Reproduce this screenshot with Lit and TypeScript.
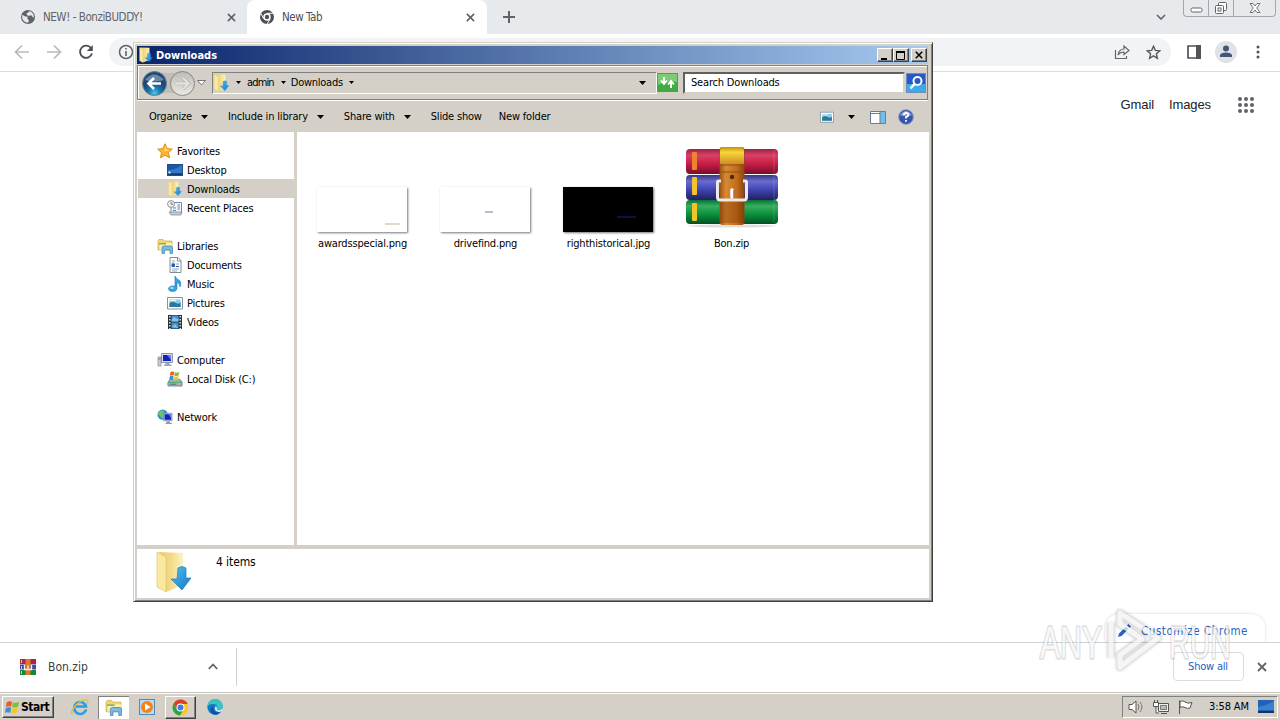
import { LitElement, html, svg, css } from "lit";
import { customElement } from "lit/decorators.js";

const icon = (w: number, h: number, body: unknown, box = `0 0 ${w} ${h}`) =>
  html`<svg class="ic" width=${w} height=${h} viewBox=${box} fill="none">${body}</svg>`;

const gradients = svg`<defs>
  <linearGradient id="fold" x2="1"><stop stop-color="#e9cc6c"/><stop offset=".55" stop-color="#f3dc8c"/><stop offset="1" stop-color="#fdf3c4"/></linearGradient>
  <linearGradient id="arr" x2="1" y2="1"><stop stop-color="#51c2f3"/><stop offset="1" stop-color="#1477c4"/></linearGradient>
</defs>`;

const folderDown = (w: number, h: number) => icon(w, h, svg`${gradients}
  <path d="M3 1L27 2V34L10 41z" fill="url(#fold)"/>
  <path d="M1 1L10 6V41L1 36z" fill="#fbe99f" stroke="#dcc16a" stroke-width=".6"/>
  <path d="M22 17Q26 14 30 17V27H35L26 39L15 28H21z" fill="url(#arr)" stroke="#1c82c9" stroke-width=".7"/>`, "0 0 36 42");

const star = icon(17, 17, svg`<path d="M8.500.8L10.800 5.900L16.300 6.500L12.200 10.300L13.400 15.900L8.500 13.100L3.600 15.900L4.700 10.300L.7 6.500L6.200 5.900Z" fill="#fdb52c" stroke="#d9841b" stroke-width=".9"/><path d="M8.500 3L10 7L14 7.500L8 9Z" fill="#ffe184"/>`, "0 0 17 17");
const desktop = icon(16, 16, svg`<rect x=".5" y="2.500" width="15" height="11" fill="#1b56ac" stroke="#244f83"/><path d="M1 8Q8 8 15 3V11H1z" fill="#2f78ca"/><path d="M1 11.500H15V13H1z" fill="#173a70"/><path d="M1 10.500l1.500-1.500 1.500 1.500-1.500 1.500z" fill="#bfe0f4"/>`);
const recent = icon(16, 16, svg`<path d="M4 2.500H14.500V13H4z" fill="#f2f5f8" stroke="#7b8794"/><path d="M2 12H15L14 15H4z" fill="#c3ccd4" stroke="#7b8794" stroke-width=".7"/><path d="M6 8h3M6 10.500h3M10.500 5h2.500M10.500 7h2.500M10.500 9h2.500" stroke="#5688b4"/><circle cx="4" cy="4" r="3.400" fill="#f7f7f7" stroke="#8e8e8e"/><path d="M4 2V4.300H6" stroke="#555" stroke-width=".8"/>`);
const library = (w: number, h: number) => icon(w, h, svg`<path d="M1 3L2 1.500H6L7.500 3H15V12H1z" fill="#f2d875" stroke="#c6a845" stroke-width=".7"/><path d="M2.500 5H15V12H2.500z" fill="#fff0a6"/><path d="M2 5h7v1.500H2z" fill="#69b47c"/><path d="M5 15.500V10Q5 8 7 8H14Q15.500 8 15.500 10V15.500H13V12H7.500V15.500z" fill="#79bce3" stroke="#4182b4" stroke-width=".7"/>`, "0 0 16 16");
const documentIcon = icon(16, 16, svg`<path d="M3 .5H11L14 3.500V15.500H3z" fill="#fff" stroke="#7d8c9c"/><path d="M10.500 1v3H14" stroke="#7d8c9c"/><path d="M5 4h3M5 6h2M9 7h3M5 12h7M5 14h5" stroke="#92a5b8"/><path d="M4.500 6.500h3.500v3.500H4.500z" fill="#2763ab"/><path d="M9 9.500h3" stroke="#2763ab"/>`);
const music = icon(16, 16, svg`<path d="M8 0Q9 3 12 4Q15 6 13 11Q13 7 10 6.500V12Q10 15.500 5.500 15.500Q1.500 15.500 1.500 12.500Q2 9.500 8 10z" fill="#35a3e1" stroke="#1878ba" stroke-width=".6"/><ellipse cx="5" cy="12" rx="2" ry="1" fill="#9edbfa"/>`);
const pictures = (w: number, h: number) => icon(w, h, svg`<path d="M.5 2.500H15.500V14H.5z" fill="#fff" stroke="#8594a2"/><path d="M2.500 4.500H13.500V12H2.500z" fill="#8accf0"/><path d="M2.500 8Q6 6 9 8T13.500 7V12H2.500z" fill="#2c7785"/><path d="M2.500 11Q8 8 13.500 10.500V12H2.500z" fill="#2a74a8"/><path d="M3 5.500h6" stroke="#e4f5fc"/>`, "0 0 16 16");
const videos = icon(16, 16, svg`<path d="M1 1H15V15H1z" fill="#26303a"/><path d="M4.500 1.500H11.500V7.500H4.500zM4.500 8.500H11.500V14.500H4.500z" fill="#3c94d2"/><path d="M4.500 6L7 3L10 5L11.500 4V7.500H4.500zM5 13L8 10L11 14z" fill="#8bbfdf"/><path d="M2.800 2V15M13.200 2V15" stroke="#fff" stroke-width="1.300" stroke-dasharray="1.500 1.500"/>`);
const computer = icon(16, 16, svg`<path d="M4.500 1.500H15.500V10.500H4.500z" fill="#d7dce8" stroke="#8b94a8"/><path d="M6 3H14V9H6z" fill="#1420bd"/><path d="M10 3h4v5z" fill="#687ceb"/><path d="M8.500 11h4v1.500h2V14H7v-1.500h1.500z" fill="#9da6b6"/><path d="M1 5H4V14H1z" fill="#cbd0d8" stroke="#7d8795" stroke-width=".7"/><path d="M1.500 7h2" stroke="#657080"/>`);
const flagPaths = svg`<path d="M1 2Q4 0 7 1.500L6 7Q3 6 0 7.500z" fill="#ee5b22"/><path d="M8 2Q11 3.500 15 1.500L14 7Q10 9 7 7.200z" fill="#83bd3e"/><path d="M0 8.500Q3 7 6 8L5 14Q2 12.500-1 14z" fill="#358ee0"/><path d="M7 8.500Q10 10 14 8L13 13.500Q9 15.500 6 14z" fill="#f8c520"/>`;
const disk = icon(17, 17, svg`<path d="M3 9L14 9L16 12V16H1V12z" fill="#a7b3b9" stroke="#65757d" stroke-width=".8"/><path d="M1 12h15" stroke="#4fb57c" stroke-width="1.500"/><path d="M3 14h7" stroke="#4c6375"/><g transform="translate(3 0) scale(.67)">${flagPaths}</g>`);
const network = icon(17, 17, svg`<circle cx="6" cy="6" r="5.500" fill="#2b94c5"/><path d="M2 3Q5 1 8 2L6 5L8 8L5 10L3 7L1 6z" fill="#71c268"/><path d="M7 4.500H16V12.500H7z" fill="#cfd5e6" stroke="#7e88a4" stroke-width=".8"/><path d="M8 5.500H15V11.500H8z" fill="#1422bf"/><path d="M12 5.500h3v4z" fill="#6a80ee"/><path d="M10 13h4v2h2v1H9v-1h1z" fill="#919bb0"/>`);

const winrar = icon(96, 84, svg`<defs>
  <linearGradient id="r" y2="1" x2="0"><stop stop-color="#942443"/><stop offset=".25" stop-color="#dc4065"/><stop offset=".6" stop-color="#c51e46"/><stop offset="1" stop-color="#750d2a"/></linearGradient>
  <linearGradient id="b" y2="1" x2="0"><stop stop-color="#343577"/><stop offset=".25" stop-color="#676cd0"/><stop offset=".6" stop-color="#4043b0"/><stop offset="1" stop-color="#20215e"/></linearGradient>
  <linearGradient id="g" y2="1" x2="0"><stop stop-color="#087036"/><stop offset=".25" stop-color="#38ae5f"/><stop offset=".6" stop-color="#0b8f3c"/><stop offset="1" stop-color="#035120"/></linearGradient>
  <linearGradient id="belt" x2="1"><stop stop-color="#9b5214"/><stop offset=".25" stop-color="#d88a32"/><stop offset=".7" stop-color="#c26b1b"/><stop offset="1" stop-color="#8a4510"/></linearGradient>
  <linearGradient id="gold" y2="1" x2="0"><stop stop-color="#c89000"/><stop offset=".3" stop-color="#f7d63c"/><stop offset="1" stop-color="#cf8d22"/></linearGradient></defs>
  <ellipse cx="48" cy="80" rx="44" ry="1.500" fill="#000" opacity=".13"/>
  <rect x="2" y="3" width="92" height="25" rx="4" fill="url(#r)"/>
  <rect x="2" y="29" width="92" height="25" rx="4" fill="url(#b)"/>
  <rect x="2" y="54" width="92" height="24" rx="4" fill="url(#g)"/>
  <path d="M90 4V77" stroke="#fff" stroke-opacity=".15"/>
  <rect x="8" y="6" width="5" height="18" rx="1" fill="#eb842d"/><rect x="8" y="31" width="5" height="18" rx="1" fill="#f1c42e"/><rect x="8" y="57" width="5" height="18" rx="1" fill="#f1c42e"/>
  <rect x="35.500" y="1" width="25" height="78" rx="3" fill="url(#belt)"/>
  <path d="M36 5Q36 1 40 1H57Q60 1 60 5V18H36z" fill="url(#gold)"/><path d="M36 19H60M36 26H60" stroke="#8f4e13"/><path d="M36 55H60V77H36z" fill="#7a3500" opacity=".35"/>
  <circle cx="48" cy="31" r="2.200" fill="#572800"/>
  <path d="M37 35H34.500Q33.500 35 33.500 36V51Q33.500 54 36 54H60Q62.500 54 62.500 51V36Q62.500 35 61 35H59" stroke="#eee9e7" stroke-width="3"/><path d="M48 44V51" stroke="#fff" stroke-width="3.500" stroke-linecap="round"/><path d="M49.800 44v8" stroke="#8d7b72"/>`);
const winrarSmall = icon(16, 16, svg`<path d="M0 0H16V5H0z" fill="#b32044"/><path d="M0 5.500H16V10.500H0z" fill="#4148a8"/><path d="M0 11H16V16H0z" fill="#16853a"/><path d="M5.500 0H10.500V16H5.500z" fill="#dc7927"/><path d="M1.500 1v3M1.500 7v3M1.500 12v3" stroke="#f1d254"/><path d="M4.500 6V10.500H11.500V6M8 6.500v4" stroke="#f5eeee" stroke-width="1.300"/>`);

const x = (s: number, c = "#5f6368", w = 1.8) => icon(s, s, svg`<path d="M1 1L9 9M9 1L1 9" stroke=${c} stroke-width=${w}/>`, "0 0 10 10");
const down = icon(7, 4, svg`<path d="M0 0H7L3.500 4z" fill="#000"/>`);
const downSm = icon(5, 3, svg`<path d="M0 0H5L2.500 3z" fill="#000"/>`);
const chromeIcon = icon(17, 17, svg`<circle cx="8.500" cy="8.500" r="8" fill="#f9c826"/><path d="M1.600 4.500A8 8 0 0 1 15.700 5H8.500L5.200 10.500z" fill="#df3d2d"/><path d="M1.600 4.500A8 8 0 0 0 8 16.500L11.500 10.500H5.200z" fill="#2ba24d"/><circle cx="8.500" cy="8.500" r="4" fill="#fff"/><circle cx="8.500" cy="8.500" r="3" fill="#397fe4"/>`);

@customElement("app-root")
export class AppRoot extends LitElement {
  static styles = css`
    :host { display: block; width: 1280px; height: 720px; position: relative; overflow: hidden; background: #fff; color: #000; font: 11px/14px "DejaVu Sans Condensed", "DejaVu Sans", sans-serif; font-stretch: condensed; letter-spacing: -.18px; }
    * { box-sizing: border-box; }
    .ic { display: block; flex: none; }
    .browser { height: 720px; display: flex; flex-direction: column; }
    .row { display: flex; align-items: center; white-space: nowrap; }
    .tabs { height: 34px; background: #e7eaed; padding-left: 20px; color: #5f6368; font-size: 11.500px; flex: none; letter-spacing: -.45px; }
    .tab1 { width: 227px; gap: 7px; } .tab1 .ic:last-child, .tab2 .ic:last-child { margin-left: auto; }
    .tab1 { padding-right: 11px; }
    .tab2 { height: 34px; width: 240px; background: #fff; border-radius: 8px 8px 0 0; padding: 0 12px 0 12px; gap: 7px; color: #4b4e52; }
    .plus { margin-left: 16px; } .tabmenu { margin-left: 641px; }
    .controls { align-self: flex-start; margin-left: 17px; border: 1px solid #a4a8ac; border-top: 0; border-radius: 0 0 4px 4px; height: 17px; width: 93px; }
    .controls .row { height: 16px; justify-content: center; width: 25px; border-right: 1px solid #a4a8ac; }
    .controls .row:last-child { width: 41px; border: 0; }
    .toolbar { height: 38px; border-bottom: 1px solid #dadce0; padding: 0 0 1px 14px; flex: none; }
    .toolbar > .ic { margin-right: 16px; }
    .omni { width: 1062px; height: 28px; border-radius: 14px; background: #f1f3f4; padding: 0 10px 0 9px; margin-left: -1px; }
    .omni .share { margin-left: auto; margin-right: 16px; display: block; }
    .side { margin: 0 15px 0 16px; } .avatar { margin: 0 19px 0 -1px; }
    .page { flex: 1; display: flex; flex-direction: column; align-items: flex-end; justify-content: space-between; overflow: hidden; }
    .links { padding: 24px 26px 0 0; font: 13px/17px "Liberation Sans", Arial, sans-serif; color: #202124; letter-spacing: -.1px; }
    .links span { margin-right: 15px; } .links span + span { margin-right: 27px; }
    .customize { width: 160px; height: 28px; margin-right: 15px; padding: 5px 0 0 13px; gap: 8px; border-radius: 14px 14px 0 0; color: #2a64bd; box-shadow: 0 0 3px #d4d4d4; font-size: 11.500px; line-height: 14px; letter-spacing: .55px; }
    .customize .ic { margin-right: 2px; }
    .dl { height: 50px; border-top: 1px solid #d0d2d5; flex: none; padding: 0 13px 2px 20px; font-size: 12px; color: #3c4043; letter-spacing: 0; }
    .dlitem { height: 38px; width: 217px; border-right: 1px solid #d0d2d5; padding-right: 18px; gap: 12px; }
    .dlitem .ic:last-child { margin-left: auto; }
    .showall { margin-left: auto; width: 71px; height: 29px; border: 1px solid #dadce0; border-radius: 4px; justify-content: center; color: #1a5fc8; font-size: 11px; letter-spacing: -.2px; margin-right: 13px; padding-right: 1px; }
    .task { height: 28px; background: #d4d0c8; border-top: 1px solid #c7c3bc; box-shadow: inset 0 1px #fff; flex: none; padding: 2px 2px 1px; }
    .btn { background: #d4d0c8; border: 1px solid; border-color: #fff #404040 #404040 #fff; box-shadow: inset -1px -1px #808080; }
    .start { width: 52px; height: 22px; font-weight: bold; font-size: 12px; letter-spacing: -.5px; padding-left: 2px; gap: 1px; margin-right: 17px; }
    .app { height: 23px; width: 31px; justify-content: center; }
    .pressed { background: #fff; border-color: #404040 #fff #fff #404040; box-shadow: inset 1px 1px #808080; margin-left: 9px; }
    .wmp { margin: 0 10px 0 10px; } .edge { margin-left: 11px; }
    .tray { margin-left: auto; height: 22px; width: 156px; border: 1px solid; border-color: #808080 #fff #fff #808080; padding: 0 1px 0 5px; }
    .tray .ic { margin-right: 8px; } .tray span { margin: 0 9px 0 8px; letter-spacing: -.1px; } .tray .ic:last-child { margin: 0; }

    .win { position: absolute; left: 133px; top: 42px; width: 800px; height: 560px; background: #d4d0c8; border: 1px solid; border-color: #d4d0c8 #404040 #404040 #d4d0c8; box-shadow: inset 1px 1px #fff, inset -1px -1px #808080; padding: 3px; display: flex; flex-direction: column; }
    .title { height: 18px; margin-right: 1px; background: linear-gradient(90deg, #0a246a, #a6caf0); color: #fff; font-weight: bold; padding: 0 1px 0 2px; letter-spacing: 0; flex: none; }
    .title span { padding-top: 1px; }
    .title .ic { margin-right: 3px; }
    .wb { width: 16px; height: 14px; justify-content: center; } .wb .ic { margin: 0; } .first { margin-left: auto; } .last { margin-left: 2px; }
    .nav { height: 35px; margin: 1px 1px 0 0; border: 1px solid #808080; box-shadow: inset 1px 1px #fff, 0 1px #fff; padding-left: 4px; flex: none; }
    .drop { margin: 0 6px 0 0; }
    .addr { width: 445px; height: 22px; border: 1px solid; border-color: #808080 #fff #fff #808080; padding-left: 0; letter-spacing: -.25px; }
    .addr .ic { margin-right: 6px; } .addr span { margin-right: 6px; } .addr .adm { letter-spacing: -.85px; margin-right: 7px; } .addr .adm + .ic { margin-right: 5px; } .addr .end { margin: 0 4px 0 auto; }
    .search { width: 222px; height: 22px; background: #fff; border: 2px solid; border-color: #606060 #d4d0c8 #d4d0c8 #606060; padding: 1px 0 0 6px; margin: 0 1px 0 5px; }
    .cmd { height: 32px; padding: 2px 16px 0 12px; flex: none; }
    .cmd span { margin-right: 9px; } .cmd .ic { margin-right: 20px; } .cmd .slide { margin-right: 17px; }
    .cmd .v { display: flex; } .cmd .v .ic { margin-right: 12px; } .cmd .view { margin: 0 2px 0 auto; } .cmd .panel { margin-left: -5px; } .cmd .last-ic .ic { margin-right: -1px; }
    .main { height: 413px; display: flex; gap: 3px; flex: none; padding-right: 0; }
    .tree { width: 157px; background: #fff; padding-top: 9px; }
    .tree .row { height: 19px; padding-left: 19px; gap: 4px; margin-left: 1px; } .tree .child { padding-left: 29px; gap: 4px; } .tree .sel { background: #d4d0c8; } .tree .gap { margin-top: 19px; }
    .tree .row span { padding-top: 2px; }
    .tree .row .ic { width: 16px; height: 16px; }
    .files { flex: 1; background: #fff; display: flex; padding: 13px 0 0 4px; }
    .file { width: 123px; height: 107px; display: flex; flex-direction: column; align-items: center; justify-content: flex-end; }
    .thumb { width: 90px; height: 45px; background: #fff; box-shadow: 1px 1px 2px #777; margin: 0 2px 4px 0; display: flex; }
    .black { background: #000; }
    .mark { width: 15px; height: 1.500px; background: #e1dac4; margin: 36px 0 0 68px; } .m2 { width: 8px; background: #b8bdd7; margin: 24px 0 0 45px; } .m3 { width: 19px; background: #10103f; margin: 29px 0 0 54px; }
    .file .ic { margin-bottom: 6px; }
    .name { height: 16px; line-height: 15px; }
    .details { height: 49px; margin-top: 4px; background: #fff; display: flex; padding: 2px 0 0 19px; gap: 24px; font-size: 12px; line-height: 22px; letter-spacing: -.1px; }
    .wm { position: absolute; left: 1036px; top: 604px; }
    .wm text { font: 45px "Liberation Sans", sans-serif; letter-spacing: 0; }
    .wm .halo { opacity: .13; filter: blur(.8px); }
    .wm .face { opacity: .72; }
  `;

  private file(name: string, cls: string, mark: string) {
    return html`<div class="file"><div class="thumb ${cls}"><div class="mark ${mark}"></div></div><div class="name">${name}</div></div>`;
  }

  private node(ic: unknown, text: string, cls = "") {
    return html`<div class="row ${cls}">${ic}<span>${text}</span></div>`;
  }

  render() {
    return html`
    <div class="browser">
      <div class="row tabs">
        <div class="row tab1">${icon(16, 16, svg`<circle cx="8" cy="8" r="7" fill="#5f6368"/><path d="M2.200 6Q4 6 5 7.500H7.500V10L9 11.500L8 13.800Q3 13 2.200 9zM9 2.200L8 4H6.500L7 6L9 7L11 6L13.500 9Q14.500 5 11 2.800z" fill="#e7eaed"/>`)}<span>NEW! - BonziBUDDY!</span>${x(9)}</div>
        <div class="row tab2">${icon(16, 16, svg`<circle cx="8" cy="8" r="7" fill="#4d5156"/><circle cx="8" cy="8" r="3.700" fill="#fff"/><circle cx="8" cy="8" r="2.200" fill="#4d5156"/><path d="M8 4.300H15M4.800 9.800L1.600 4.200M11.200 9.800L7.800 15.500" stroke="#fff"/>`)}<span>New Tab</span>${x(9)}</div>
        <div class="plus">${icon(12, 12, svg`<path d="M6 0V12M0 6H12" stroke="#5f6368" stroke-width="2"/>`)}</div>
        <div class="tabmenu">${icon(10, 6, svg`<path d="M1 1L5 5L9 1" stroke="#5f6368" stroke-width="1.600"/>`)}</div>
        <div class="row controls">
          <div class="row">${icon(13, 16, svg`<rect x="1" y="8" width="11" height="4" rx="1.500" stroke="#5f6368" fill="#fff"/>`)}</div>
          <div class="row">${icon(14, 16, svg`<rect x="4.500" y="2.500" width="8" height="8" rx="1" stroke="#5f6368" fill="#fff"/><rect x="1.500" y="5.500" width="8" height="8" rx="1" stroke="#5f6368" fill="#fff"/><rect x="4" y="8" width="3" height="3" stroke="#5f6368"/>`)}</div>
          <div class="row">${icon(12, 16, svg`<path d="M1 3.500H4L6 6L8 3.500H11L7.700 8L11 12.500H8L6 10L4 12.500H1L4.300 8z" stroke="#70757a" fill="#fff"/>`)}</div>
        </div>
      </div>
      <div class="row toolbar">
        ${icon(16, 16, svg`<path d="M15 8H2M8 1.500L1.500 8L8 14.500" stroke="#b8babd" stroke-width="1.700"/>`)}
        ${icon(16, 16, svg`<path d="M1 8H14M8 1.500L14.500 8L8 14.500" stroke="#b8babd" stroke-width="1.700"/>`)}
        ${icon(16, 16, svg`<path d="M13 4A6.100 6.100 0 1 0 14 9.500" stroke="#4b4f54" stroke-width="1.900"/><path d="M14.800 1V7H8.800z" fill="#4b4f54"/>`)}
        <div class="row omni">${icon(16, 16, svg`<circle cx="8" cy="8" r="6.500" stroke="#5f6368" stroke-width="1.500"/><path d="M8 7V12M8 4V5.600" stroke="#5f6368" stroke-width="1.600"/>`)}
          <div class="share">${icon(16, 16, svg`<path d="M1.500 6V14.500H12.500V12M4 11Q5 5 10 5V2L15 6.500L10 10.500V8Q6 8 4 11z" stroke="#62666a" stroke-width="1.200"/>`)}</div>
          ${icon(15, 15, svg`<path d="M7.500 1.300L9.300 5.400L13.800 5.800L10.400 8.800L11.400 13.300L7.500 10.900L3.600 13.300L4.600 8.800L1.200 5.800L5.700 5.400z" stroke="#55595e" stroke-width="1.400"/>`)}</div>
        <div class="side">${icon(14, 14, svg`<path d="M1 1H13V13H1z" stroke="#505459" stroke-width="1.700"/><path d="M9 0H14V14H9z" fill="#505459"/>`)}</div>
        <div class="avatar">${icon(22, 22, svg`<circle cx="11" cy="11" r="11" fill="#dfe2e6"/><circle cx="11" cy="7.500" r="3" fill="#465574"/><path d="M5 16V14Q6 11.500 11 11.500T17 14V16z" fill="#465574"/>`)}</div>
        ${icon(4, 14, svg`<circle cx="2" cy="2" r="1.500" fill="#505459"/><circle cx="2" cy="7" r="1.500" fill="#505459"/><circle cx="2" cy="12" r="1.500" fill="#505459"/>`)}
      </div>
      <div class="page">
        <div class="row links"><span>Gmail</span><span>Images</span>${icon(16, 16, [2, 8, 14].map(cy => [2, 8, 14].map(cx => svg`<circle cx=${cx} cy=${cy} r="2" fill="#5f6368"/>`)))}</div>
        <div class="row customize">${icon(13, 13, svg`<path d="M0 13L1 9.500L8 2.500L10.500 5L3.500 12zM9 1.500L10.500 0L13 2.500L11.500 4z" fill="#2a64bd"/>`)}<span>Customize Chrome</span></div>
      </div>
      <div class="row dl">
        <div class="row dlitem">${winrarSmall}<span>Bon.zip</span>${icon(10, 7, svg`<path d="M.8 6L5 1.500L9.200 6" stroke="#5f6368" stroke-width="1.800"/>`)}</div>
        <div class="row showall">Show all</div>${x(10)}
      </div>
      <div class="row task">
        <div class="row btn start">${icon(15, 15, flagPaths, "-1 0 17 16")}<span>Start</span></div>
        ${icon(18, 18, svg`<path d="M15 11.500A6 6 0 1 1 15 8.500H5" stroke="#2b9ee0" stroke-width="2.600"/><path d="M2 16Q-2 16 4 8Q12 0 16 2Q18 3 16 6" stroke="#e9bd3a" stroke-width="1.300"/>`)}
        <div class="row app pressed">${library(17, 17)}</div>
        <div class="wmp">${icon(16, 16, svg`<rect x=".5" y=".5" width="15" height="15" fill="#b9dcf4" stroke="#508ab8"/><circle cx="8" cy="8" r="6" fill="#ee8420"/><path d="M6 4.500L11.500 8L6 11.500z" fill="#fff"/>`)}</div>
        <div class="row btn app">${chromeIcon}</div>
        <div class="edge">${icon(16, 16, svg`<circle cx="8" cy="8" r="7.700" fill="#1876c6"/><path d="M.5 7A7.600 7.600 0 0 1 15.700 8Q15.500 11 11 11Q9 10.500 10 9Q11 6 7 5Q3 4.500.5 7z" fill="#35c4c0"/><path d="M6 7Q5 14 13 13.500Q10 17 6 15Q1 11 6 7z" fill="#104f9e"/><path d="M10 9Q9 11 11.500 11.200T15.700 9L15 12Q11 14 8.500 11.500Q7 9 9 7z" fill="#d7edf4"/>`)}</div>
        <div class="row tray">
          ${icon(17, 16, svg`<path d="M1 5.500H4L8 2V14L4 10.500H1z" fill="#fff" stroke="#555"/><path d="M10 5Q12 8 10 11M12 3Q16 8 12 13" stroke="#777"/>`)}
          ${icon(16, 16, svg`<path d="M5.500 4.500H15.500V12.500H5.500z" fill="#eee" stroke="#555"/><path d="M7.500 6.500H13.500V10.500H7.500z" fill="#bbb" stroke="#777"/><path d="M8 14.500H14" stroke="#555"/><path d="M.5 3.500H5.500V7.500H.5zM1.500 1V3M4.500 1V3M3 8V14H6" stroke="#555" fill="#fff"/>`)}
          ${icon(16, 16, svg`<path d="M2.500 15V1.500" stroke="#555"/><path d="M3 2.500Q6 1 8 3Q11 5 15 3.500L13 9Q10 10 8 8.500Q6 7 3 8.500z" fill="#fff" stroke="#555"/>`)}
          <span>3:58 AM</span>${icon(16, 14, svg`<path d="M0 0H16V12H0z" fill="#2263b5"/><path d="M0 7Q9 6 16 1V10H0z" fill="#3a81cf"/><path d="M0 11H16V13H0z" fill="#15315d"/>`)}
        </div>
      </div>
    </div>

    <div class="win">
      <div class="row title">${folderDown(14, 16)}<span>Downloads</span>
        <div class="row btn wb first">${icon(10, 9, svg`<path d="M1 7H7V9H1z" fill="#000"/>`)}</div>
        <div class="row btn wb">${icon(10, 9, svg`<path d="M.5 1H8.500V8.500H.5z" stroke="#000"/><path d="M0 1H9" stroke="#000" stroke-width="2"/>`)}</div>
        <div class="row btn wb last">${x(8, "#000", 1.9)}</div>
      </div>
      <div class="row nav">
        ${icon(55, 28, svg`<defs><radialGradient id="bk" cy=".9"><stop stop-color="#49c9ef"/><stop offset=".5" stop-color="#1a76ab"/><stop offset="1" stop-color="#1c4a78"/></radialGradient><linearGradient id="fw" y2="1" x2="0"><stop stop-color="#bcbbb8"/><stop offset="1" stop-color="#ece9e4"/></linearGradient></defs>
          <path d="M12 2Q27 6 42 2V26Q27 22 12 26z" fill="#c0bdb7"/><circle cx="12.500" cy="14.500" r="12" fill="url(#bk)" stroke="#6e7f8c"/><path d="M3 11Q12 0 22 11Q12 14 3 11z" fill="#fff" opacity=".35"/><path d="M19 14.500H7M12 9L6.500 14.500L12 20" stroke="#fff" stroke-width="2.600"/>
          <circle cx="40.500" cy="14.500" r="12" fill="url(#fw)" stroke="#898781"/><path d="M34 14.500H46M41 9L46.500 14.500L41 20" stroke="#b5b2ad" stroke-width="3.600"/><path d="M34 14.500H46M41 9L46.500 14.500L41 20" stroke="#e6e3df" stroke-width="2.300"/>`)}
        <div class="drop">${icon(9, 6, svg`<path d="M.5.5H8.500L4.500 5z" fill="#fff" stroke="#777"/>`)}</div>
        <div class="row addr">${folderDown(17, 18)}${downSm}<span class="adm">admin</span>${downSm}<span>Downloads</span>${downSm}<div class="row end">${down}</div></div>
        ${icon(21, 20, svg`<rect x=".5" y=".5" width="20" height="18" fill="#42a944" stroke="#698d65"/><path d="M1 1H20V9Q10 7 1 12z" fill="#7ccc73"/><path d="M7 4V10M4 7.500L7 11L10 7.500M14 15V9M11 11.500L14 8L17 11.500" stroke="#fff" stroke-width="1.900"/>`)}
        <div class="row search">Search Downloads</div>
        ${icon(20, 20, svg`<rect x=".5" y=".5" width="19" height="19" fill="#2857c7" stroke="#6e8bbc"/><path d="M1 11H19V19H1z" fill="#3cabe9"/><circle cx="11.500" cy="8" r="4" stroke="#fff" stroke-width="2"/><path d="M8.500 11L4.500 15.500" stroke="#fff" stroke-width="2.500"/>`)}
      </div>
      <div class="row cmd"><span>Organize</span>${down}<span>Include in library</span>${down}<span>Share with</span>${down}<span class="slide">Slide show</span><span class="newf">New folder</span>
        <div class="v view">${pictures(14, 14)}</div>${down}
        <div class="v panel">${icon(16, 15, svg`<path d="M.5 1.500H15.500V13.500H.5z" fill="#fff" stroke="#667c98"/><path d="M10 2H15V13H10z" fill="#75bde7"/><path d="M1 3.500H10M10 2V13" stroke="#667c98"/>`)}</div>
        <div class="v last-ic">${icon(16, 16, svg`<circle cx="8" cy="8" r="7.300" fill="#3454ae" stroke="#8394bc"/><path d="M2 6Q8-2 14 6Q8 9 2 6z" fill="#849dde"/><path d="M5.800 6Q6 4 8.200 4T10.300 6Q10.300 7.200 8 8.200V9.500M8 11V12.800" stroke="#fff" stroke-width="1.800"/>`)}</div>
      </div>
      <div class="main">
        <div class="tree">
          ${this.node(star, "Favorites")}${this.node(desktop, "Desktop", "child")}${this.node(folderDown(16, 16), "Downloads", "child sel")}${this.node(recent, "Recent Places", "child")}
          ${this.node(library(16, 16), "Libraries", "gap")}${this.node(documentIcon, "Documents", "child")}${this.node(music, "Music", "child")}${this.node(pictures(16, 16), "Pictures", "child")}${this.node(videos, "Videos", "child")}
          ${this.node(computer, "Computer", "gap")}${this.node(disk, "Local Disk (C:)", "child")}
          ${this.node(network, "Network", "gap")}
        </div>
        <div class="files">
          ${this.file("awardsspecial.png", "", "")}${this.file("drivefind.png", "", "m2")}${this.file("righthistorical.jpg", "black", "m3")}
          <div class="file">${winrar}<div class="name">Bon.zip</div></div>
        </div>
      </div>
      <div class="details">${folderDown(36, 42)}<span>4 items</span></div>
    </div>

    <svg class="wm" width="204" height="76" viewBox="0 0 204 76" fill="none" stroke-linejoin="round">
      <g class="halo" stroke="#000" stroke-width="9"><path d="M84 9L122 34L84 63V51L106 35L84 20z"/><path d="M75 18V54"/></g>
      <g class="face" stroke="#fff" stroke-width="5"><path d="M84 9L122 34L84 63V51L106 35L84 20z"/><path d="M75 18V54"/></g>
      <g fill="#fff" fill-opacity=".75" stroke="#000" stroke-opacity=".13" stroke-width="3.500" paint-order="stroke"><text x="4" y="54" textLength="62" lengthAdjust="spacingAndGlyphs">ANY</text><text x="133" y="54" textLength="62" lengthAdjust="spacingAndGlyphs">RUN</text></g>
    </svg>`;
  }
}
